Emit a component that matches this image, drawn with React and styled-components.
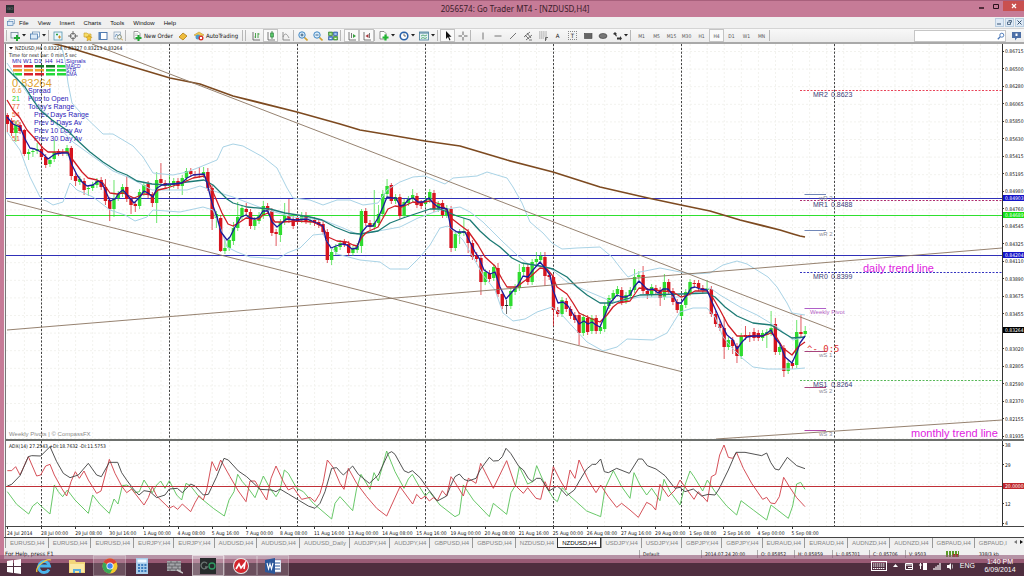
import { useState } from "react";
import styled, { createGlobalStyle } from "styled-components";

const GlobalStyle = createGlobalStyle`
  * { box-sizing: border-box; }
  body { margin: 0; background: #4f2e3f; font-family: "Liberation Sans", Arial, sans-serif; }
  button, input { font: inherit; color: inherit; }
`;

const Window = styled.div` background: #f0f0f0; `;
const TitleBar = styled.header`
  position: relative; display: flex; align-items: center; justify-content: space-between;
  height: 17px; padding-left: 6px; background: #c67b97; border-top: 1px solid #a8607c;
`;
const AppIcon = styled.span`
  width: 8px; height: 8px; background: #2b2f33; color: #7d8a86; font-size: 4px; line-height: 8px; text-align: center;
`;
const Title = styled.h1`
  margin: 0; flex: 1; padding-left: 41px; text-align: center; font: 400 8px/14px "Noto Sans", sans-serif; color: #3a1d2a;
`;
const WindowButtons = styled.div` display: flex; align-self: flex-start; `;
const WindowButton = styled.button`
  display: grid; place-items: center; width: ${(p) => (p.$close ? 21 : 14)}px; height: 10px; padding: 0; border: none;
  background: ${(p) => (p.$close ? "#c9504f" : "transparent")}; color: ${(p) => (p.$close ? "#fff" : "#2a121d")};
`;
const Body = styled.main` padding-left: 4px; background: #c67b97; `;
const MenuBar = styled.nav`
  display: flex; align-items: center; height: 11px; padding-left: 3px; background: #f0f0f0;
`;
const MenuItem = styled.button`
  padding: 0 5px 0 4px; border: none; background: none; font: 400 6px/10px "Liberation Sans", sans-serif; color: #111;
`;
const Spacer = styled.span` flex: 1; `;
const MdiButton = styled.button`
  display: grid; place-items: center; width: 9px; height: 9px; margin-left: 1px; padding: 0;
  border: 1px solid #b9cde0; background: #dfeaf6; color: #35506e;
`;
const Toolbar = styled.div`
  display: flex; align-items: center; height: 14px; padding-left: 2px;
  background: linear-gradient(#f8f8f8, #ececec); border-top: 1px solid #d4d4d4;
`;
const Grip = styled.span`
  width: ${(p) => p.$w}px; height: 11px; flex: none; border-left: 1px solid #b8b8b8;
`;
const ToolButton = styled.button`
  display: flex; align-items: center; justify-content: center; gap: 2px; flex: none; height: 13px; padding: 0;
  width: ${(p) => p.$w || 15}px; border: 1px solid ${(p) => (p.$on ? "#c4c4c4" : "transparent")};
  background: ${(p) => (p.$on ? "#fafafa" : "none")};
  font: 400 6px/10px "DejaVu Sans Condensed", "DejaVu Sans", sans-serif; color: #111; white-space: nowrap;
`;
const Period = styled(ToolButton)` font-size: 5px; color: #555; `;
const SearchBox = styled.label`
  display: flex; align-items: center; width: 92px; height: 12px; margin-right: 3px; border: 1px solid #c6c6c6; background: #fff;
`;
const SearchInput = styled.input`
  flex: 1; min-width: 0; height: 10px; padding: 0 2px; border: none; outline: none; background: none; font-size: 6px;
`;
const Pane = styled.section`
  display: grid; grid-template-columns: 1fr 22px; margin-left: 1px; background: #fff;
  border-left: 1px solid #777; border-bottom: ${(p) => p.$line};
`;
const Frame = styled.div` border-top: 2px solid #a9a9a9; background: #f0f0f0; `;
const Chart = styled.svg` display: block; width: 100%; height: auto; `;
const Scale = styled.div`
  position: relative; display: flex; flex-direction: column; justify-content: space-between;
  padding-top: ${(p) => p.$top}px; border-left: 1px solid #333; overflow: hidden;
`;
const ScaleLabel = styled.span`
  display: flex; align-items: center; height: 6px; color: #111; font: 400 5px/6px "DejaVu Sans Condensed", "DejaVu Sans", sans-serif;
  &::before { content: ""; width: 1px; height: 1px; margin-right: 1px; background: #333; }
`;
const Badge = styled.span`
  position: absolute; left: 0; right: 0; top: ${(p) => p.$top}; height: 6px; padding-left: 2px; margin-top: -3px;
  background: ${(p) => p.$color}; color: #fff; font: 400 5px/6px "DejaVu Sans Condensed", "DejaVu Sans", sans-serif;
`;
const TimeAxis = styled.div`
  display: grid; grid-template-columns: repeat(24, 20fr) 104fr; height: 10px; margin-left: 1px; padding-right: 22px;
  background: #fff; border-left: 1px solid #777;
`;
const TimeLabel = styled.span`
  padding-left: 1px; color: #111; white-space: nowrap; font: 400 5px/8px "DejaVu Sans Condensed", "DejaVu Sans", sans-serif;
  &::before { content: ""; display: block; width: 1px; height: 2px; background: #333; }
`;
const Tabs = styled.div`
  display: flex; align-items: flex-start; height: 12px; padding-left: 1px; overflow: hidden;
  background: #f0f0f0; border-top: 1px solid #444;
`;
const Tab = styled.button`
  flex: none; height: 10px; padding: 0 3px 0 4px; border: solid ${(p) => (p.$on ? "#333" : "#999")};
  border-width: ${(p) => (p.$on ? "0 1px 1px" : "0 0 0 1px")}; background: ${(p) => (p.$on ? "#fff" : "none")};
  color: ${(p) => (p.$on ? "#000" : "#858585")}; font-size: 6px; line-height: 8px; white-space: nowrap;
`;
const TabScroll = styled.span`
  display: flex; justify-content: space-between; flex: none; width: 10px; margin-left: auto; padding-right: 1px;
  font-size: 5px; line-height: 9px; color: #222;
`;
const StatusBar = styled.footer`
  display: grid; grid-template-columns: 1fr 62px 56px 37px 38px 37px 36px 37px 33px 49px;
  align-items: center; height: 10px; background: #f0f0f0;
`;
const Status = styled.span`
  display: flex; align-items: center; height: 8px; padding-left: 3px; border-left: 1px solid ${(p) => (p.$plain ? "transparent" : "#aaa")};
  font: 400 5px/8px "DejaVu Sans Condensed", "DejaVu Sans", sans-serif; color: #111; white-space: nowrap;
`;
const HelpText = styled(Status)` padding-left: 0; font-size: 6px; `;
const Taskbar = styled.footer`
  position: relative; display: flex; align-items: stretch; height: 21px; margin-top: -4px; padding-right: 5px;
  background: linear-gradient(rgba(140, 80, 112, .58) 0 4px, #985a74 4px 8px, #4f2e3f 8px 100%);
`;
const Task = styled.button`
  display: grid; place-items: center; width: ${(p) => p.$w}px; padding: 0; border: 1px solid transparent; background: none;
  ${(p) => p.$open && "background: rgba(255,255,255,.16); border-color: rgba(255,255,255,.22);"}
  ${(p) => p.$front && "background: rgba(255,255,255,.3); border-color: rgba(255,255,255,.5);"}
`;
const Tray = styled.div`
  display: flex; align-items: center; gap: 6px; margin-left: auto; color: #fff; font-size: 7px; line-height: 8px;
`;
const Clock = styled.time` width: 38px; text-align: center; `;

// open, close, high, low as heights on the chart; 0 takes a short default wick
const candles = [
  [115,124,113,132],[121,133,0,0],[133,125,121,142],[125,131,0,0],[130,154,129,156],[154,152,0,160],[152,151,0,157],[151,149,143,0],[149,157,0,0],[157,165,0,0],
  [164,160,0,167],[159,152,140,0],[151,153,149,0],[152,153,0,0],[153,148,145,0],[148,176,146,180],[176,181,0,186],[182,179,0,0],[181,190,0,195],[189,188,0,196],
  [188,185,0,0],[185,181,0,0],[180,187,0,0],[187,201,179,205],[200,209,0,221],[209,199,180,217],[198,194,0,0],[194,187,0,0],[187,199,176,0],[199,205,0,214],
  [204,206,0,212],[206,192,0,0],[193,185,0,0],[184,195,0,0],[195,203,0,207],[203,180,172,223],[179,183,163,0],[183,186,0,0],[186,184,175,0],[185,181,0,0],
  [181,186,0,0],[186,178,0,195],[178,171,0,0],[171,174,168,0],[174,175,0,0],[174,175,167,0],[175,172,167,0],[172,188,168,0],[188,219,0,230],[218,214,0,228],
  [218,251,0,252],[251,248,240,254],[248,240,0,0],[241,228,222,245],[228,217,202,0],[217,208,0,0],[209,212,203,0],[212,226,0,0],[226,220,0,230],[221,215,0,0],
  [216,206,201,0],[206,211,0,0],[211,233,0,0],[232,234,0,246],[235,222,0,242],[222,216,203,0],[216,220,199,0],[219,226,0,0],[218,221,0,0],[220,215,0,0],
  [216,221,212,0],[222,220,0,0],[220,223,0,0],[222,225,0,0],[224,232,0,0],[232,260,0,263],[260,252,0,265],[252,247,244,0],[247,243,0,0],[242,244,0,0],
  [244,253,0,256],[253,249,0,0],[250,246,0,0],[246,211,209,253],[211,223,0,0],[223,227,0,0],[227,223,190,0],[223,214,205,0],[214,194,190,0],[194,186,179,0],
  [185,201,183,0],[201,197,0,0],[197,216,0,0],[215,202,0,0],[203,199,0,0],[199,195,189,0],[196,205,0,0],[203,206,0,0],[204,200,0,0],[200,192,0,0],
  [193,209,0,0],[209,204,0,0],[203,215,0,0],[215,208,0,0],[209,248,0,252],[248,234,0,0],[234,232,0,244],[233,231,218,0],[232,243,0,253],[243,257,0,0],
  [255,259,0,0],[258,282,0,295],[282,272,0,0],[273,279,0,0],[278,267,0,0],[268,294,263,0],[294,306,0,0],[306,305,300,314],[306,291,0,0],[292,287,0,0],
  [288,272,264,0],[272,267,0,0],[267,282,0,0],[282,262,0,0],[262,259,252,0],[260,256,252,0],[257,276,252,286],[275,277,0,0],[277,310,0,326],[310,314,0,0],
  [314,300,0,0],[301,309,0,0],[309,316,0,0],[315,320,0,0],[315,333,0,345],[333,317,0,0],[318,332,0,0],[331,318,0,0],[318,331,0,0],[331,327,0,334],
  [329,306,0,0],[306,298,0,0],[299,293,0,0],[294,289,0,0],[290,302,0,0],[301,295,0,0],[296,290,0,0],[290,277,269,0],[277,275,271,0],[275,291,266,0],
  [291,294,0,299],[294,287,0,0],[288,291,0,0],[290,298,0,306],[297,282,274,0],[282,292,0,0],[291,302,0,0],[302,310,0,0],[316,305,0,0],[305,292,0,0],
  [293,282,0,0],[283,284,0,0],[283,288,0,0],[288,291,0,0],[290,288,280,0],[289,314,0,0],[314,324,0,0],[324,328,0,0],[328,347,317,359],[347,340,0,0],
  [340,346,0,354],[346,356,0,363],[356,336,0,0],[335,337,326,0],[335,337,0,342],[332,338,328,0],[333,338,0,0],[338,333,0,0],[335,332,0,348],[333,328,311,0],
  [324,352,318,0],[352,347,0,0],[348,371,0,377],[371,363,0,0],[363,366,0,0],[365,332,320,0],[332,334,315,0],[334,331,326,0],
];

const averages = [
  { color: "#a9d3e6", width: 1, points: "61,44 65,60 68,83 72,103 80,112 103,134 113,134 133,146 143,157 153,173 173,175 187,172 200,167 217,160 223,147 233,144 243,146 263,157 277,168 287,188 293,198 310,200 323,205 337,200 350,200 363,205 378,203 387,190 400,182 413,177 425,176 445,184 453,178 477,176 487,172 497,175 507,178 513,187 522,203 530,222 543,233 552,243 562,249 577,248 600,247 612,257 622,270 628,277 640,272 660,268 680,272 693,274 710,273 723,265 737,261 747,264 760,272 768,277 777,287 787,303 792,313 805,315" },
  { color: "#a9d3e6", width: 1, points: "7,63 30,97 73,142 113,171 130,178 152,190 167,190 187,190 200,186 220,193 233,197 267,210 293,217 323,220 343,228 357,234 373,232 400,227 418,218 440,210 460,207 470,212 483,222 493,232 503,242 517,255 528,264 550,268 567,282 587,291 613,302 640,297 681,297 710,288 720,295 740,307 757,315 777,327 793,340 805,337" },
  { color: "#a9d3e6", width: 1, points: "7,132 20,150 30,177 40,197 53,205 63,202 70,183 77,190 93,197 110,210 125,215 135,221 147,217 153,210 180,212 203,207 213,210 222,232 227,247 237,252 250,257 267,258 278,259 287,253 300,248 313,235 323,234 328,243 337,254 360,260 380,262 390,269 408,269 420,257 430,245 440,228 448,226 463,240 473,257 483,275 495,290 503,313 513,321 525,319 537,312 552,307 562,315 573,327 587,342 603,351 617,347 627,339 653,340 667,333 680,312 693,308 707,308 715,317 723,337 732,348 742,358 753,367 767,369 793,369 805,368" },
  { color: "#7d4a20", width: 1.7, points: "51,43 67,47 103,58 170,78 200,84 233,96 297,112 340,124 360,130 390,135 425,141 460,146 507,160 553,172 600,187 648,198 681,205 710,211 740,220 780,230 793,234 800,236 805,237" },
  { color: "#1c7a74", width: 1.3, points: "7,69 25,87 33,100 40,110 52,120 68,131 78,141 90,152 103,162 117,171 127,175 137,181 152,184 167,185 187,182 204,180 213,185 227,199 233,203 247,207 270,209 285,213 310,217 322,220 335,227 350,233 360,234 378,231 390,223 403,218 418,213 430,209 440,209 457,216 470,220 480,231 490,240 500,247 512,258 522,263 540,266 553,269 567,277 577,287 587,295 600,303 613,303 630,298 640,295 681,294 707,293 715,297 725,307 737,316 753,323 771,325 782,332 792,338 805,337" },
  { color: "#d01c24", width: 1.3, points: "7,100 13,110 20,118 27,130 37,141 43,148 48,152 68,152 73,160 82,172 88,178 97,180 103,183 110,193 117,194 123,193 134,198 144,194 153,195 158,190 167,188 182,183 193,178 204,176 208,180 213,192 222,213 228,224 233,226 240,222 246,218 259,219 263,215 268,213 275,222 282,222 297,221 313,222 323,227 328,237 337,241 347,242 353,245 357,246 362,237 367,232 378,227 383,218 388,209 395,206 402,207 413,202 418,203 430,201 440,204 447,210 451,218 460,225 468,231 478,245 485,257 495,266 502,279 507,287 517,287 523,282 530,277 540,268 547,269 552,275 557,287 567,294 573,303 579,313 592,319 600,322 607,315 613,307 618,303 630,301 639,288 653,290 673,292 681,297 688,295 695,291 707,291 713,298 720,310 728,325 737,336 763,336 771,333 777,338 783,348 792,355 798,347 805,342" },
  { color: "#1c1c9c", width: 1.3, points: "7,117 13,124 20,127 25,139 30,148 35,149 41,152 48,159 55,154 62,153 68,153 72,165 77,175 82,182 87,186 93,185 98,181 102,183 106,192 110,201 115,199 119,193 123,190 128,196 134,203 139,198 144,191 148,193 153,197 157,188 162,185 167,184 173,184 182,183 187,178 193,175 204,174 207,183 212,203 217,217 221,232 227,240 230,237 235,227 241,217 246,215 250,218 255,219 259,217 263,211 268,211 272,222 277,227 282,223 286,219 297,220 307,219 317,223 323,226 326,240 331,248 336,246 342,244 347,245 352,249 357,248 362,232 367,226 373,226 378,218 383,207 387,197 392,198 396,198 400,206 404,205 408,200 413,198 418,202 423,202 429,198 433,203 438,207 447,209 451,228 457,232 465,232 470,242 475,252 479,258 484,270 490,274 495,272 500,287 506,299 512,292 518,285 523,276 528,277 533,270 540,262 545,268 550,275 553,290 558,303 563,302 568,306 575,317 579,324 584,321 588,324 592,322 596,325 600,327 605,315 610,303 617,295 622,297 626,297 630,295 634,287 639,281 643,285 648,290 653,289 658,293 663,289 668,289 673,295 677,303 681,303 687,295 691,288 695,287 700,289 707,290 712,302 717,313 722,325 727,335 733,340 737,349 742,342 747,337 753,336 763,336 771,330 775,338 780,344 785,357 792,363 797,352 800,343 805,336" },
];

// each line is kept in three screens of data, shifted by the screen's start
const adx = [
  { color: "#5ec45e", parts: [
    "22,200 50,238 86,267 98,243 112,232 125,245 150,267 163,180 175,200 188,215 202,195 225,225 265,265 278,210 300,238 328,265 342,222 354,237 367,182 380,180 392,187 405,203 418,200 432,165 445,185 457,203 470,180 482,168 495,190 508,167 530,210 545,225 558,175 572,183 597,215 640,250 673,273 687,225 702,200 713,148 727,170 745,190 765,218 790,153 810,190 828,215 840,195 853,135 865,145 890,190 910,200 940,235 995,282 1005,235 1020,215",
    "0,215 38,257 50,190 63,148 90,193 102,143 115,168 140,78 165,140 192,190 205,162 217,148 235,180 256,213 268,200 300,240 345,275 358,268 370,180 400,225 448,275 460,235 500,268 513,203 527,180 538,125 563,177 578,170 590,122 615,180 640,220 652,230 667,188 690,213 740,258 770,270 782,275 795,190 820,137 845,185 870,220 882,143 900,180 920,210 935,190 960,227 972,163 990,200 1020,240",
    "0,240 15,180 30,138 42,155 68,198 82,165 105,200 140,243 170,270 183,227 220,255 260,285 273,240 290,253 325,280 338,243 350,177 362,172 375,193"] },
  { color: "#d2444c", parts: [
    "22,137 35,137 47,125 60,150 85,95 110,153 122,150 137,123 150,118 163,150 185,190 200,213 213,170 226,140 238,160 252,138 265,165 290,205 303,198 328,103 345,145 365,183 380,203 395,192 432,240 445,218 457,185 470,213 508,250 520,243 533,253 547,237 572,260 585,233 597,212 610,225 620,195 636,110 650,138 662,105 690,155 715,198 738,230 750,168 765,168 800,225 813,160 828,123 850,170 865,195 880,188 905,223 930,217 945,230 960,205 970,170 982,105 1000,128 1020,175",
    "0,175 12,193 25,130 50,175 80,215 110,250 140,273 180,185 218,237 230,208 243,222 256,213 268,228 280,218 292,227 307,197 320,213 333,155 345,172 370,213 385,160 408,175 422,115 460,190 500,107 525,180 550,205 563,188 588,220 602,223 615,170 627,198 640,125 660,165 678,195 690,135 705,160 717,105 745,165 768,203 782,180 805,215 830,247 845,235 870,255 895,277 920,232 935,240 947,255 960,178 985,215 1005,195 1020,165",
    "0,165 42,223 55,200 82,230 94,155 107,148 119,90 132,60 145,97 158,100 170,83 190,130 215,175 248,223 260,217 272,234 285,236 298,215 311,157 330,188 350,218 375,245"] },
  { color: "#454545", parts: [
    "22,183 35,178 60,152 85,95 95,92 122,93 150,65 170,110 190,145 210,158 235,150 265,115 290,150 304,155 328,112 353,112 365,143 380,165 400,192 417,210 432,197 450,200 470,218 495,210 508,192 532,190 547,203 572,177 585,183 610,210 625,208 650,155 672,100 685,105 715,138 740,155 780,193 815,195 828,200 840,192 865,207 895,225 925,243 945,250 960,235 975,200 995,130 1010,128 1020,140",
    "0,140 10,150 38,123 55,148 88,175 115,150 145,85 155,80 165,88 192,137 205,143 217,137 240,158 265,193 292,228 320,213 333,180 345,155 358,147 372,163 385,168 408,160 420,135 448,97 460,108 475,107 487,95 498,70 512,85 537,125 550,135 565,160 577,170 590,160 602,160 627,198 652,183 665,195 680,212 703,195 718,168 740,132 757,118 768,118 782,102 793,140 805,143 830,130 868,145 895,102 907,102 922,122 948,132 975,152 1005,190 1020,187",
    "0,187 15,200 40,192 65,213 85,208 105,210 117,192 145,135 168,82 195,82 245,92 260,84 272,112 285,132 297,135 322,97 350,122 375,131"] },
];

const dayLines = [41.5, 169.5, 297.5, 425.5, 553.5, 681.5, 834.5];
const prices = ["0.86715","0.86500","0.86280","0.86065","0.85850","0.85630","0.85415","0.85195","0.84980","0.84760","0.84545","0.84325","0.84110","0.83890","0.83675","0.83455","0.83240","0.83020","0.82805","0.82590","0.82370","0.82155","0.81935"];
const times = ["24 Jul 2014","28 Jul 00:00","29 Jul 08:00","30 Jul 16:00","1 Aug 00:00","4 Aug 08:00","5 Aug 16:00","7 Aug 00:00","8 Aug 08:00","11 Aug 16:00","13 Aug 00:00","14 Aug 08:00","15 Aug 16:00","19 Aug 00:00","20 Aug 08:00","21 Aug 16:00","25 Aug 00:00","26 Aug 08:00","27 Aug 16:00","29 Aug 00:00","1 Sep 08:00","2 Sep 16:00","4 Sep 00:00","5 Sep 08:00"];
const tabs = ["EURUSD,H4","EURUSD,H4","EURUSD,H4","EURJPY,H4","EURJPY,H4","AUDUSD,H4","AUDUSD,H4","AUDUSD_Daily","AUDJPY,H4","AUDJPY,H4","GBPUSD,H4","GBPUSD,H4","NZDUSD,H4","NZDUSD,H4","USDJPY,H4","USDJPY,H4","GBPJPY,H4","GBPJPY,H4","EURAUD,H4","EURAUD,H4","AUDNZD,H4","AUDNZD,H4","GBPAUD,H4","GBPAUD,I"];
const periods = ["M1","M5","M15","M30","H1","H4","D1","W1","MN"];

const pivots = [
  { name: "MR2", price: "0.8623", y: 91, color: "#e8455a" },
  { name: "MR1", price: "0.8488", y: 201, color: "#b03070" },
  { name: "MR0", price: "0.8399", y: 273, color: "#3434c0" },
  { name: "MS1", price: "0.8264", y: 381, color: "#58b858" },
];
const weekly = [
  { name: "wR 3", y: 194, color: "#7187b8" },
  { name: "wR 2", y: 230, color: "#7187b8" },
  { name: "wS 1", y: 351, color: "#a8447c" },
  { name: "wS 2", y: 387, color: "#a8447c" },
  { name: "wS 3", y: 430, color: "#b04aa8" },
];
const info = [
  { value: "6.6", label: "Spread", color: "#e8963c" },
  { value: "21", label: "Pips to Open", color: "#2bd32b" },
  { value: "77", label: "Today's Range", color: "#ea5a30" },
  { value: "54", label: "Prev Days Range", color: "#ea5a30", inset: true },
  { value: "56", label: "Prev 5 Days Av", color: "#ea5a30", inset: true },
  { value: "52", label: "Prev 10 Day Av", color: "#ea5a30", inset: true },
  { value: "51", label: "Prev 30 Day Av", color: "#ea5a30", inset: true },
];
const signals = [
  ["MACD", "#e8605c", "#d8202c", "#127a22", "#127a22", "#22d83a"],
  ["STR", "#efa02c", "#efa02c", "#efa02c", "#22d83a", "#22d83a"],
  ["EMA", "#22d83a", "#d8202c", "#d8202c", "#22d83a", "#22d83a"],
];
const condensed = '"DejaVu Sans Condensed", "DejaVu Sans", sans-serif';

function PriceChart() {
  return (
    <Chart viewBox="6 44 996 395" role="img" aria-label="NZDUSD H4 price chart">
      <g stroke="#f2f2ee" strokeDasharray="2 2">
        {prices.map((p, i) => <line key={p} x1="6" x2="1002" y1={51.5 + i * 17.6} y2={51.5 + i * 17.6} />)}
        {Array.from({ length: 58 }, (_, i) => <line key={i} x1={24.4 + i * 17.07} x2={24.4 + i * 17.07} y1="44" y2="440" />)}
      </g>
      <g fontSize="7" fill="#2d22b8">
        {info.map((row, i) => (
          <g key={row.label}>
            <text x="12" y={93 + i * 8} fill={row.color}>{row.value}</text>
            <text x={row.inset ? 34 : 28} y={93 + i * 8}>{row.label}</text>
          </g>
        ))}
        <text x="12" y="87" fontSize="11" fill="#e0a22c">0.83264</text>
      </g>
      <g fontSize="6" fill="#2d22b8">
        {["MN", "W1", "D1", "H4", "H1"].map((s, i) => <text key={s} x={12 + i * 11} y="63">{s}</text>)}
        <text x="66" y="63">Signals</text>
      </g>
      {signals.map(([name, ...colors], r) => (
        <g key={name}>
          {colors.map((c, i) => <rect key={i} x={13 + i * 11} y={65 + r * 4} width="9" height="2.5" fill={c} />)}
          <text x="66" y={68 + r * 4} fontSize="5" fill="#2d22b8">{name}</text>
        </g>
      ))}
      <g stroke="#444" strokeDasharray="2.2 1.6">
        {dayLines.map((x) => <line key={x} x1={x} x2={x} y1="44" y2="440" />)}
      </g>
      <g stroke="#3030b8">
        <line x1="6" x2="1002" y1="198.5" y2="198.5" />
        <line x1="6" x2="1002" y1="255.5" y2="255.5" />
      </g>
      <line x1="6" x2="1002" y1="215.5" y2="215.5" stroke="#2fe02f" />
      {candles.map(([open, close, high, low], i) => {
        const x = 7.3 + i * 4.267;
        const top = Math.min(open, close);
        const bottom = Math.max(open, close);
        const color = i === 117 ? "#222" : close < open ? "#2fdc2f" : "#d6141e";
        return (
          <g key={i} fill={color}>
            <rect x={x - 0.5} y={high || top - 3} width="1" height={(low || bottom + 3) - (high || top - 3)} opacity=".7" />
            <rect x={x - 1.7} y={top} width="3.4" height={Math.max(bottom - top, 1)} />
          </g>
        );
      })}
      {averages.map((a, i) => (
        <polyline key={i} points={a.points} fill="none" stroke={a.color} strokeWidth={a.width} strokeLinejoin="round" />
      ))}
      <g stroke="#8a7460" strokeWidth=".9">
        <line x1="92" y1="44" x2="834" y2="330" />
        <line x1="7" y1="201" x2="681" y2="371.5" />
        <line x1="7" y1="330" x2="1002" y2="248" />
        <line x1="716" y1="439" x2="1002" y2="420" />
      </g>
      {pivots.map((p) => (
        <g key={p.name}>
          <line x1="800" x2="1002" y1={p.y - 0.5} y2={p.y - 0.5} stroke={p.color} strokeDasharray="2 1.5" />
          <text x="813" y={p.y + 6} fontSize="7" fill="#3c3c78">{p.name}</text>
          <text x="831" y={p.y + 6} fontSize="7" fill="#3c3c78">{p.price}</text>
        </g>
      ))}
      {weekly.map((w) => (
        <g key={w.name}>
          <line x1="804.5" x2="826" y1={w.y + 0.5} y2={w.y + 0.5} stroke={w.color} />
          <text x="819" y={w.y + 6} fontSize="6" fill="#8c8c98">{w.name}</text>
        </g>
      ))}
      <line x1="804.5" x2="826" y1="308.5" y2="308.5" stroke="#b060c8" />
      <text x="810" y="314" fontSize="6" fill="#b35cc4">Weekly Pivot</text>
      <text x="807" y="352" fontSize="9" fill="#e0302c" fontFamily='"DejaVu Sans Mono", monospace'>^- 0:5</text>
      <g fontSize="11" fill="#e01ce0">
        <text x="863" y="272">daily trend line</text>
        <text x="911" y="437">monthly trend line</text>
      </g>
      <text x="9" y="436" fontSize="6" fill="#8a8a8a">Weekly Pivots | © CompassFX</text>
      <path d="M9 47h4l-2 2.500z" fill="#111" />
      <g fontSize="5" fontFamily={condensed} fill="#111">
        <text x="15" y="50">NZDUSD,H4  0.83224 0.83327 0.83213 0.83264</text>
        <text x="9" y="57">Time for next bar: 0 min 5 sec</text>
      </g>
    </Chart>
  );
}

function AdxChart() {
  return (
    <Chart viewBox="18 48 2988 255" role="img" aria-label="Average directional index">
      <g stroke="#f2f2ee" strokeWidth="3" strokeDasharray="6 6">
        {[115, 178, 241].map((y) => <line key={y} x1="18" x2="3006" y1={y} y2={y} />)}
        {Array.from({ length: 58 }, (_, i) => <line key={i} x1={73 + i * 51.2} x2={73 + i * 51.2} y1="48" y2="303" />)}
      </g>
      <g stroke="#444" strokeWidth="3" strokeDasharray="7 5">
        {dayLines.map((x) => <line key={x} x1={x * 3} x2={x * 3} y1="48" y2="303" />)}
      </g>
      {adx.map((line) => line.parts.map((points, i) => (
        <polyline key={line.color + i} points={points} transform={`translate(${i * 1020} 0)`} fill="none" stroke={line.color} strokeWidth="2.800" />
      )))}
      <line x1="18" x2="3006" y1="184.500" y2="184.500" stroke="#c03038" strokeWidth="3.200" />
      <text x="27" y="68" fontSize="15" fontFamily={condensed} fill="#111">ADX(14) 27.2543 +DI:18.7632 -DI:11.5753</text>
    </Chart>
  );
}

const glyphs = {
  newChart: <><rect x="1" y="1.500" width="7" height="5.500" fill="#eef4fa" stroke="#6b8496" strokeWidth=".8" /><path d="M7 4v6M4 7h6" stroke="#22a532" strokeWidth="2" /></>,
  profiles: <><rect x="2.500" y="1" width="7" height="5" fill="#fff" stroke="#6a8fb5" strokeWidth=".8" /><rect x=".5" y="3" width="7" height="5" fill="#dceaf7" stroke="#4b7cb0" strokeWidth=".8" /></>,
  watch: <><rect x="1" y="1" width="8" height="8" fill="#eaf6fb" stroke="#5694b0" strokeWidth=".8" /><path d="M3 3.500h2M4 2.500v2" stroke="#2aa040" /><path d="M5 6h3M6.500 4.500v3" stroke="#d08a20" /></>,
  target: <><circle cx="5" cy="5" r="2.800" fill="none" stroke="#555" strokeWidth=".8" /><path d="M5 0v4M5 6v4M0 5h4M6 5h4" stroke="#555" strokeWidth=".8" /></>,
  folder: <><path d="M1 2h3l1 1h3v3H1z" fill="#f6dc6a" stroke="#c69a22" strokeWidth=".6" /><path d="M6 4l1 2 2 .3-1.500 1.500.4 2L6 8.800l-2 1 .5-2L3 6.300 5 6z" fill="#f4c430" stroke="#b98912" strokeWidth=".5" /></>,
  panel: <><rect x="1" y="1.500" width="8" height="7" fill="#fff" stroke="#3f6ea8" strokeWidth=".9" /><rect x="1" y="1.500" width="2" height="7" fill="#5a86bd" /></>,
  tester: <><rect x="1" y="1" width="6.500" height="7" fill="#eef3f8" stroke="#8aa0b5" strokeWidth=".7" /><path d="M2 6l1.500-3L5 5l2-2" fill="none" stroke="#4b7cb0" strokeWidth=".7" /><circle cx="6.500" cy="6" r="2" fill="#fff8" stroke="#8a8f70" strokeWidth=".8" /><path d="M8 7.500l2 2" stroke="#c49a30" /></>,
  order: <><path d="M2 .5h4l2 2V8H2z" fill="#fff" stroke="#777" strokeWidth=".7" /><path d="M3 3h3M3 4.500h3" stroke="#999" strokeWidth=".5" /><path d="M6.500 4v6M3.500 7h6" stroke="#22a532" strokeWidth="2" /></>,
  editor: <path d="M1 6l4-4 4 3-4 4z" fill="#eebc3c" stroke="#b07c10" strokeWidth=".8" />,
  auto: <><path d="M0 4l5-3 5 3-5 2z" fill="#f0ca50" stroke="#b88c20" strokeWidth=".5" /><circle cx="4" cy="6" r="2.500" fill="#4c9acc" /><circle cx="7" cy="7" r="2.500" fill="#d8342c" /><rect x="6" y="6" width="2" height="2" fill="#fff" /></>,
  bars: <><path d="M2 1v8h7" fill="none" stroke="#555" strokeWidth=".8" /><path d="M4.500 2v5M4.500 6h-1M7 2v5M7 3h1.500" stroke="#3a9a3a" strokeWidth=".9" /></>,
  candle: <><path d="M2 1v8h7" fill="none" stroke="#555" strokeWidth=".8" /><path d="M6 0v8" stroke="#267a36" strokeWidth=".8" /><rect x="4.700" y="2" width="2.600" height="4" fill="#5ccc6c" stroke="#267a36" strokeWidth=".7" /></>,
  line: <><path d="M2 1v8h7" fill="none" stroke="#777" strokeWidth=".8" /><path d="M2 6c2-5 4-3 6 1" fill="none" stroke="#888" strokeWidth=".8" /></>,
  zoomIn: <><path d="M6 6l3.500 3.500" stroke="#d0a030" strokeWidth="1.600" /><circle cx="4" cy="4" r="3.200" fill="#d8ecfa" stroke="#4488c4" /><path d="M2.500 4h3M4 2.500v3" stroke="#246" strokeWidth=".8" /></>,
  zoomOut: <><path d="M6 6l3.500 3.500" stroke="#d0a030" strokeWidth="1.600" /><circle cx="4" cy="4" r="3.200" fill="#d8ecfa" stroke="#4488c4" /><path d="M2.500 4h3" stroke="#246" strokeWidth=".8" /></>,
  tile: <><path d="M.5 1h4v3.500h-4zM5.500 5.500h4V9h-4z" fill="#6cc04c" stroke="#24702a" strokeWidth=".6" /><path d="M5.500 1h4v3.500h-4zM.5 5.500h4V9h-4z" fill="#5f94dc" stroke="#224a90" strokeWidth=".6" /><path d="M1.500 3h2M6.500 3h2M1.500 7.500h2M6.500 7.500h2" stroke="#fff" strokeWidth=".9" /></>,
  scroll: <><path d="M2 1v8h7M4.500 2v5" fill="none" stroke="#555" strokeWidth=".8" /><path d="M6 3l3 2-3 2z" fill="#35a03c" /></>,
  shift: <><path d="M2 1v8h7M7.500 2v5" fill="none" stroke="#555" strokeWidth=".8" /><path d="M6.500 3l-3 2 3 2z" fill="#a8383c" /></>,
  indicators: <><path d="M1 .5h4l2 2V8H1z" fill="#fff" stroke="#666" strokeWidth=".7" /><path d="M6.500 3.500v6M3.500 6.500h6" stroke="#22b532" strokeWidth="2.200" /></>,
  clock: <><circle cx="5" cy="5" r="3.800" fill="#fff" stroke="#2a62a8" strokeWidth="1.600" /><path d="M5 2.500V5h2" fill="none" stroke="#333" strokeWidth=".7" /></>,
  template: <><rect x=".5" y="1" width="9" height="8" fill="#e5f3f5" stroke="#487c9a" strokeWidth=".8" /><path d="M.5 2h9" stroke="#487c9a" /><path d="M2 5l2-1 2 1 2-1M2 7.500l2-1 2 1 2-1" fill="none" stroke="#3a9a5a" strokeWidth=".8" /></>,
  cursor: <path d="M3 0v8l2-2 1.500 3.500 1-.5L6 5.700h2.500z" fill="#111" />,
  cross: <path d="M5 .5v3.500M5 6v3.500M.5 5h3.500M6 5h3.500" stroke="#555" strokeWidth=".9" />,
  vline: <path d="M5 1.500v7" stroke="#666" strokeWidth=".9" />,
  hline: <path d="M1.500 5h7" stroke="#666" strokeWidth=".9" />,
  trend: <path d="M2 8l6-6" stroke="#666" strokeWidth=".9" />,
  channel: <path d="M1 6l6-5M3 9l6-5M2 4l4 4M4 2l4 5M6 9h3" stroke="#555" strokeWidth=".8" />,
  fibo: <><path d="M1 1h8M1 3h8M1 5h8M1 7h5" stroke="#777" strokeWidth=".7" strokeDasharray="1.300 .5" /><path d="M7.500 10V6.500H10M7.500 8H9" fill="none" stroke="#333" strokeWidth=".7" /></>,
  rect: <rect x="1.500" y="2.500" width="7.500" height="5" fill="#666" stroke="#444" strokeWidth=".6" />,
  ellipse: <ellipse cx="5" cy="5" rx="4" ry="2.500" fill="#777" stroke="#444" strokeWidth=".7" />,
  arrows: <><path d="M1 3l2-2 2 2-1 .5 1 1.500-1 .5-1-1.500z" fill="#333" /><path d="M5 6.500h3V5l2 2.500-2 2V8.500H5z" fill="#333" /></>,
  search: <><circle cx="6" cy="4" r="2.500" fill="none" stroke="#4b78b8" strokeWidth="1.200" /><path d="M4 6L1 9" stroke="#4b78b8" strokeWidth="1.600" /></>,
  chat: <><path d="M0 1h9v6H5L3 9.500V7H0z" fill="#4d6fa6" /><rect x="3.500" y="2.500" width="2" height="2.500" fill="#fff" /></>,
};

const TextTool = styled.span`
  width: 9px; height: 9px; line-height: 8px; border: 1px dotted ${(p) => (p.$boxed ? "#888" : "transparent")};
`;

function Icon({ name, size = 10 }) {
  return <svg width={size} height={size} viewBox="0 0 10 10" aria-hidden="true">{glyphs[name]}</svg>;
}

function Tool({ icon, label, on, menu, children }) {
  return (
    <ToolButton aria-label={label} $on={on} $w={menu ? 20 : 15}>
      {icon && <Icon name={icon} />}
      {children}
      {menu && <svg width="4" height="3" viewBox="0 0 4 3" aria-hidden="true"><path d="M0 0h4L2 2.500z" fill="#222" /></svg>}
    </ToolButton>
  );
}

function Tools({ period, setPeriod }) {
  return (
    <Toolbar>
      <Grip $w={2} />
      <Tool icon="newChart" label="New chart" menu />
      <Tool icon="profiles" label="Profiles" menu />
      <Grip $w={2} />
      <Tool icon="watch" label="Market watch" />
      <Tool icon="target" label="Data window" />
      <Tool icon="folder" label="Navigator" />
      <Tool icon="panel" label="Terminal" />
      <Tool icon="tester" label="Strategy tester" />
      <Grip $w={5} />
      <ToolButton $w={45}><Icon name="order" />New Order</ToolButton>
      <Tool icon="editor" label="MetaEditor" />
      <ToolButton $w={52}><Icon name="auto" />AutoTrading</ToolButton>
      <Grip $w={3} />
      <Grip $w={3} />
      <Tool icon="bars" label="Bar chart" />
      <Tool icon="candle" label="Candlesticks" on />
      <Tool icon="line" label="Line chart" />
      <Grip $w={2} />
      <Tool icon="zoomIn" label="Zoom in" />
      <Tool icon="zoomOut" label="Zoom out" />
      <Tool icon="tile" label="Tile windows" />
      <Grip $w={4} />
      <Tool icon="scroll" label="Auto scroll" on />
      <Tool icon="shift" label="Chart shift" on />
      <Grip $w={3} />
      <Tool icon="indicators" label="Indicators" menu />
      <Tool icon="clock" label="Periods" menu />
      <Tool icon="template" label="Templates" menu />
      <Grip $w={3} />
      <Tool icon="cursor" label="Cursor" on />
      <Tool icon="cross" label="Crosshair" />
      <Grip $w={5} />
      <Tool icon="vline" label="Vertical line" />
      <Tool icon="hline" label="Horizontal line" />
      <Tool icon="trend" label="Trendline" />
      <Tool icon="channel" label="Channel" />
      <Tool icon="fibo" label="Fibonacci" />
      <Tool><TextTool>A</TextTool></Tool>
      <Tool><TextTool $boxed>T</TextTool></Tool>
      <Tool icon="rect" label="Rectangle" />
      <Tool icon="ellipse" label="Ellipse" />
      <Tool icon="arrows" label="Arrows" menu />
      <Grip $w={4} />
      {periods.map((p) => <Period key={p} $on={p === period} onClick={() => setPeriod(p)}>{p}</Period>)}
      <Grip $w={1} />
      <Spacer />
      <SearchBox>
        <SearchInput aria-label="Search" />
        <Icon name="search" size={8} />
      </SearchBox>
      <ToolButton aria-label="Chat"><Icon name="chat" /></ToolButton>
    </Toolbar>
  );
}

const tasks = [
  { label: "Start", w: 28, art: <path d="M1 3l6-1v6H1zM8 2l7-1v7H8zM1 9h6v6l-6-1zM8 9h7v7l-7-1z" fill="#fff" /> },
  { label: "Internet Explorer", w: 32, art: <><path d="M13 11.500A5.500 5.500 0 1 1 13.500 8H4" fill="none" stroke="#4ab4ec" strokeWidth="2.800" /><path d="M1 14C-1 9 10 0 15 2" fill="none" stroke="#f0c840" strokeWidth="1.300" /></> },
  { label: "File Explorer", w: 33, art: <><path d="M0 2h6l1 2h9v11H0z" fill="#f3d67a" /><path d="M1 6h14v8H1z" fill="#fbe9a6" /><path d="M4 11h8v4h-2v-2H6v2H4z" fill="#5cb0de" /></> },
  { label: "Chrome", w: 33, open: true, art: <><circle cx="8" cy="8" r="7.500" fill="#f6cc2c" /><path d="M8 8L1.500 4.200A7.500 7.500 0 0 1 14.500 4.200z" fill="#db4437" /><path d="M8 8L1.500 4.200A7.500 7.500 0 0 0 8 15.500L11 10z" fill="#3aa757" /><circle cx="8" cy="8" r="3.500" fill="#fff" /><circle cx="8" cy="8" r="2.700" fill="#4285f4" /></> },
  { label: "Calculator", w: 32, art: <><rect x="2" y="0" width="12" height="16" fill="#a9cdea" /><rect x="3.500" y="1.500" width="9" height="3" fill="#eef8ff" /><path d="M4 7h9M4 10h9M4 13h9" stroke="#3c7cbc" strokeWidth="1.800" strokeDasharray="2 1.200" /></> },
  { label: "Network", w: 34, art: <><path d="M0 3h14v10H0z" fill="#a4a5a9" /><path d="M0 5h14M0 8h14M0 11h14M4 3v2M10 3v2M2 5v3M8 5v3M5 8v3M11 8v3M3 11v2M9 11v2" stroke="#5b5b60" strokeWidth=".8" /><path d="M10 12l6 3" stroke="#ccc" strokeWidth="1.500" /></> },
  { label: "Go Trader", w: 32, front: true, art: <><rect width="16" height="16" fill="#272b2c" /><path d="M7 5.500A3.300 3.300 0 1 0 7.300 9H5" fill="none" stroke="#6b7472" strokeWidth="1.300" /><circle cx="12" cy="8" r="3" fill="none" stroke="#2f9a62" strokeWidth="1.300" /></> },
  { label: "Charts", w: 33, open: true, art: <><circle cx="8" cy="8" r="8" fill="#e8e8e8" /><circle cx="8" cy="8" r="7" fill="#d3272e" /><path d="M3 11l3-5 2 4 4-5-1 6" fill="none" stroke="#fff" strokeWidth="1.600" /></> },
  { label: "Word", w: 32, open: true, art: <><rect x="7" y="2" width="9" height="12" fill="#fff" stroke="#8ba6d0" strokeWidth=".6" /><path d="M10 5h5M10 8h5M10 11h5" stroke="#2b579a" /><path d="M0 2l10-2v16L0 14z" fill="#2b579a" /><path d="M2 5l1.500 6L5 6l1.500 5L8 5" fill="none" stroke="#fff" strokeWidth="1.100" /></> },
];

export default function App() {
  const [period, setPeriod] = useState("H4");
  const [tab, setTab] = useState(13);

  return (
    <>
      <GlobalStyle />
      <Window>
        <TitleBar>
          <AppIcon>GO</AppIcon>
          <Title>2056574: Go Trader MT4 - [NZDUSD,H4]</Title>
          <WindowButtons>
            <WindowButton aria-label="Minimize"><svg width="6" height="6"><path d="M0 5h5" stroke="currentColor" strokeWidth="1.500" /></svg></WindowButton>
            <WindowButton aria-label="Maximize"><svg width="6" height="6"><path d="M.5 1.500h5v4h-5z" fill="none" stroke="currentColor" /></svg></WindowButton>
            <WindowButton aria-label="Close" $close><svg width="6" height="6"><path d="M1 1l4 4M5 1L1 5" stroke="currentColor" strokeWidth="1.200" /></svg></WindowButton>
          </WindowButtons>
        </TitleBar>
        <Body>
          <MenuBar>
            <Icon name="profiles" size={8} />
            {["File", "View", "Insert", "Charts", "Tools", "Window", "Help"].map((m) => <MenuItem key={m}>{m}</MenuItem>)}
            <Spacer />
            <MdiButton aria-label="Minimize chart"><svg width="5" height="5"><path d="M0 4h4" stroke="currentColor" /></svg></MdiButton>
            <MdiButton aria-label="Restore chart"><svg width="5" height="5"><path d="M1.500 .5h3v2M.5 2h3v2.500h-3z" fill="none" stroke="currentColor" strokeWidth=".8" /></svg></MdiButton>
            <MdiButton aria-label="Close chart"><svg width="5" height="5"><path d="M.5 .5l4 4M4.500 .5l-4 4" stroke="currentColor" /></svg></MdiButton>
          </MenuBar>
          <Tools period={period} setPeriod={setPeriod} />
          <Frame>
            <Pane $line="2px solid #6d706d">
              <PriceChart />
              <Scale $top={4}>
                {prices.map((p) => <ScaleLabel key={p}>{p}</ScaleLabel>)}
                <Badge $top="39%" $color="#1414c8">0.84903</Badge>
                <Badge $top="43.4%" $color="#12e012">0.84689</Badge>
                <Badge $top="53.4%" $color="#1414c8">0.84204</Badge>
                <Badge $top="72.5%" $color="#000">0.83264</Badge>
              </Scale>
            </Pane>
            <Pane $line="1px solid #444">
              <AdxChart />
              <Scale $top={1}>
                {["38", "29", "", "12", "4"].map((v) => <ScaleLabel key={v}>{v}</ScaleLabel>)}
                <Badge $top="53.5%" $color="#c0282e">20.0000</Badge>
              </Scale>
            </Pane>
            <TimeAxis>{times.map((t) => <TimeLabel key={t}>{t}</TimeLabel>)}</TimeAxis>
            <Tabs>
              {tabs.map((t, i) => <Tab key={i} $on={i === tab} onClick={() => setTab(i)}>{t}</Tab>)}
              <TabScroll>
                <svg width="3" height="9"><path d="M3 2v4L0 4z" fill="#777" /></svg>
                <svg width="3" height="9"><path d="M0 2v4l3-2z" fill="#111" /></svg>
              </TabScroll>
            </Tabs>
            <StatusBar>
              <HelpText $plain>For Help, press F1</HelpText>
              <Status>Default</Status>
              <Status>2014.07.24 20:00</Status>
              <Status>O: 0.85852</Status>
              <Status>H: 0.85859</Status>
              <Status>L: 0.85701</Status>
              <Status>C: 0.85706</Status>
              <Status>V: 9503</Status>
              <Status $plain><svg width="13" height="6"><path d="M0 3h13" stroke="#5a9a28" strokeWidth="6" strokeDasharray="2 1" /><path d="M7 4.500h6" stroke="#b03020" strokeWidth="3" strokeDasharray="2 1" /></svg></Status>
              <Status $plain>338/3 kb</Status>
            </StatusBar>
          </Frame>
        </Body>
        <Taskbar>
          {tasks.map((t) => (
            <Task key={t.label} aria-label={t.label} $w={t.w} $open={t.open} $front={t.front}>
              <svg width="16" height="16" viewBox="0 0 16 16" aria-hidden="true">{t.art}</svg>
            </Task>
          ))}
          <Tray>
            <svg width="16" height="10"><rect x=".5" y=".5" width="15" height="9" fill="none" stroke="#fff" /><path d="M2 3h12M2 5h12M2 7.500h12" stroke="#fff" strokeDasharray="1.400 .6" /></svg>
            <svg width="6" height="5"><path d="M0 4h5L2.500 1z" fill="#fff" /></svg>
            <svg width="8" height="8"><path d="M.5 1.500h7v6h-7zM1 3h6M3 5.500h4" fill="none" stroke="#fff" /></svg>
            <svg width="8" height="8"><rect x="4" y="1" width="4" height="7" fill="#fff" /><path d="M1.500 1v6M0 3h3" stroke="#fff" /></svg>
            <svg width="8" height="8"><path d="M1 6v2M3 4.500V8M5 3v5M7 1v7" stroke="#fff" strokeWidth="1.200" /></svg>
            <svg width="7" height="8"><path d="M0 3h2l2-2v7L2 6H0z" fill="#fff" /><path d="M5.500 2.500v4" stroke="#ccc" strokeWidth=".8" /></svg>
            <span>ENG</span>
            <Clock dateTime="2014-09-06T13:40">1:40 PM<br />6/09/2014</Clock>
          </Tray>
        </Taskbar>
      </Window>
    </>
  );
}
